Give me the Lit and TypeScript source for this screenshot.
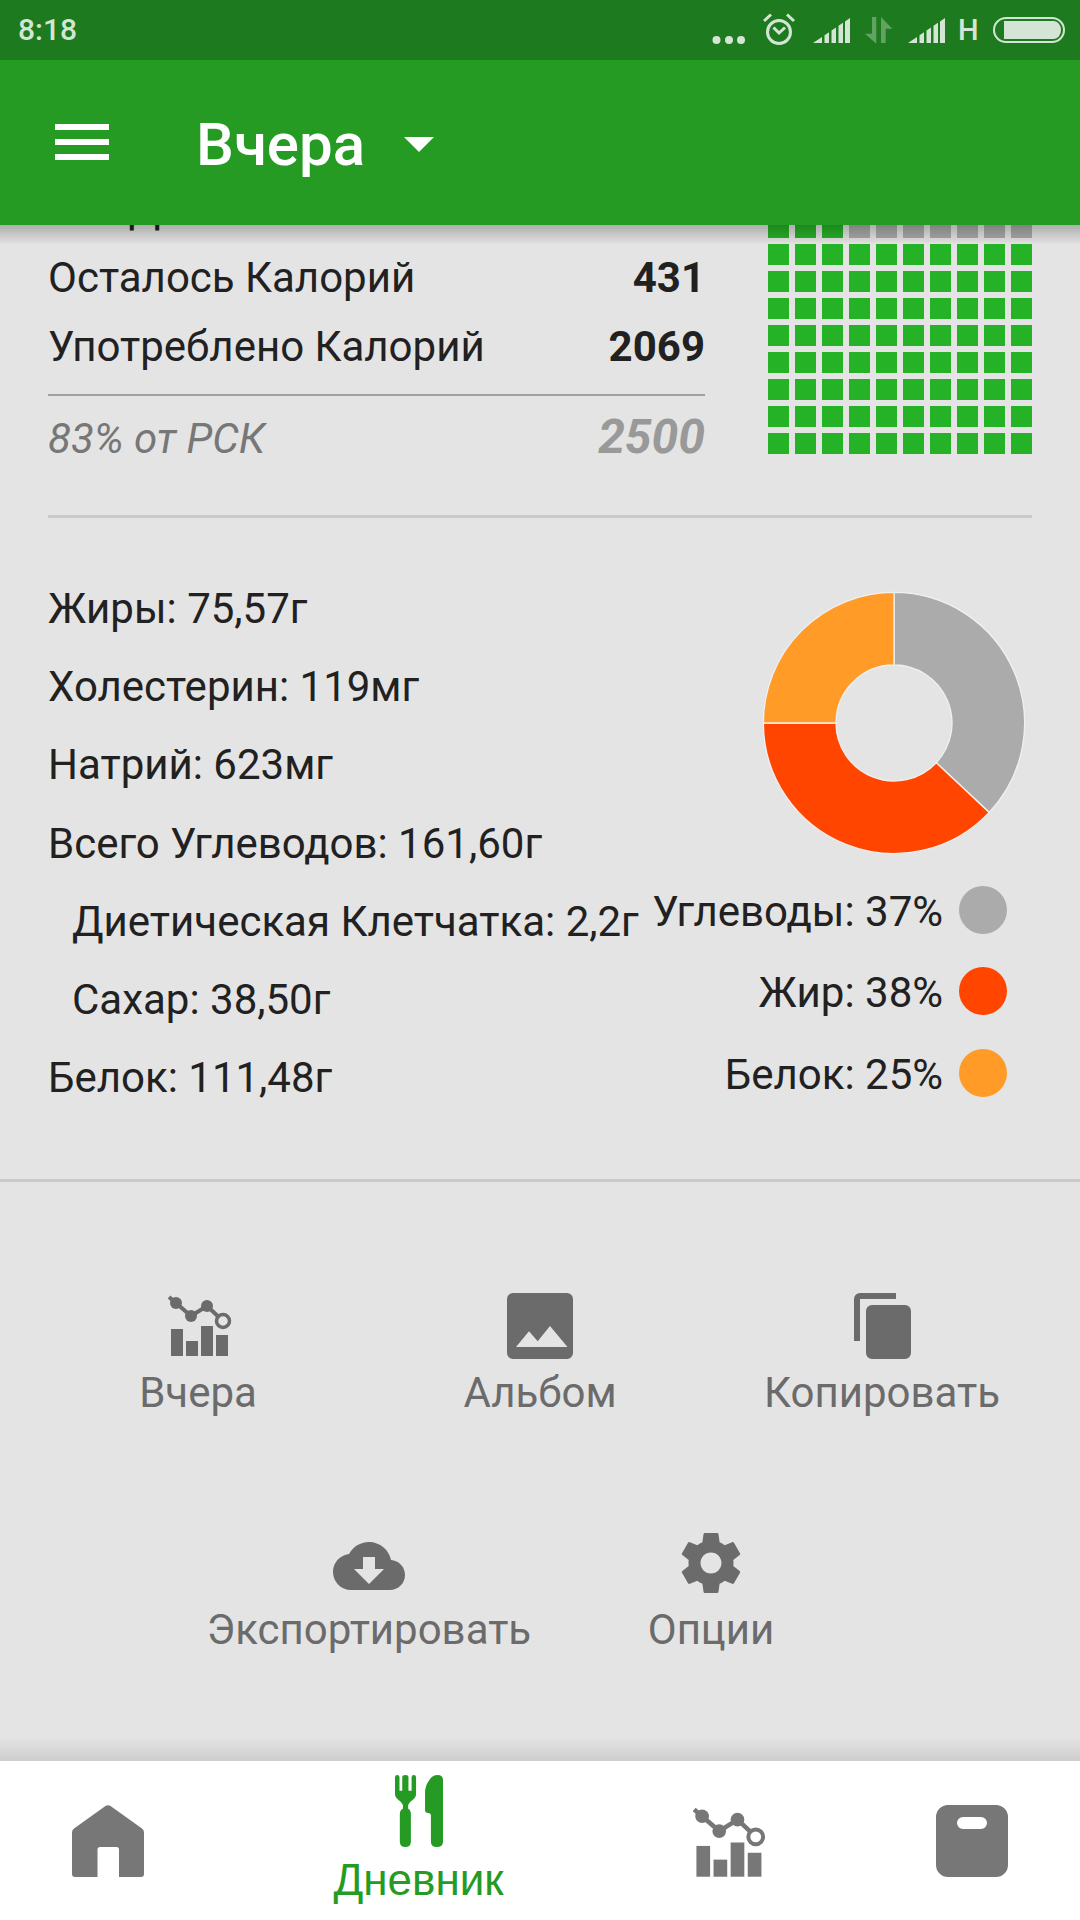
import { LitElement, html, css, svg } from "lit";
import { customElement } from "lit/decorators.js";

const signal = (extra = "") => {
  const bars = [[0, 9], [11.5, 16], [18.5, 23], [25.5, 30], [32, 37]];
  const y = (x: number) => 25 - (x * 25) / 37;
  return html`<svg class="sig ${extra}" viewBox="0 0 37 25">${bars.map(([a, b]) =>
    svg`<polygon points="${a},25 ${a},${y(a)} ${b},${y(b)} ${b},25" fill="#d5e5d5"/>`)}</svg>`;
};

const chart = (cls: string) => html`<svg class=${cls} viewBox="0 0 64 62" fill="currentColor">
  <rect x="3" y="34" width="12" height="27"/><rect x="18" y="46" width="12" height="15"/>
  <rect x="33" y="31" width="12" height="30"/><rect x="48" y="40" width="12" height="21"/>
  <polyline points="1,2 8,8 23,21 39,11 54,25" fill="none" stroke="currentColor" stroke-width="4"/>
  <circle cx="8" cy="8" r="6"/><circle cx="23" cy="21" r="6"/><circle cx="39" cy="11" r="6"/>
  <circle cx="55" cy="26" r="6.5" stroke="currentColor" stroke-width="3.5" class="ring"/>
</svg>`;

const polar = (r: number, pct: number) => {
  const a = (pct / 100) * 2 * Math.PI;
  return [135 + r * Math.sin(a), 135 - r * Math.cos(a)];
};
const slice = (from: number, to: number) => {
  const R = 130.6, r = 58;
  const [x1, y1] = polar(R, from), [x2, y2] = polar(R, to), [x3, y3] = polar(r, to), [x4, y4] = polar(r, from);
  const large = to - from > 50 ? 1 : 0;
  return `M${x1} ${y1}A${R} ${R} 0 ${large} 1 ${x2} ${y2}L${x3} ${y3}A${r} ${r} 0 ${large} 0 ${x4} ${y4}Z`;
};

@customElement("app-root")
export class AppRoot extends LitElement {
  static styles = css`
    :host { display: block; width: 1080px; height: 1920px; font-family: Roboto, "Noto Sans", sans-serif; color: #212121; background: #e4e4e4; }
    .page { display: flex; flex-direction: column; width: 1080px; height: 1920px; overflow: hidden; }
    .status { height: 60px; flex: none; background: #1e7a1e; display: flex; align-items: center; color: #d5e5d5; position: relative; z-index: 3; }
    .time { margin-left: 18px; font-size: 30px; font-weight: 500; line-height: 60px; }
    .sicons { margin-left: auto; margin-right: 15px; display: flex; align-items: center; height: 60px; }
    .sicons svg { display: block; flex: none; }
    .dots { width: 33px; height: 10px; margin-top: 19px; }
    .alarm { width: 32px; height: 32px; margin-left: 18px; margin-top: -2px; }
    .sig { width: 37px; height: 25px; margin-left: 18px; margin-top: 1px; }
    .sicons .sig2 { margin-left: 15px; }
    .arrows { width: 28px; height: 27px; margin-left: 15px; margin-top: 0px; }
    .h { font-size: 29px; font-weight: 500; width: 18px; margin-left: 13px; margin-right: 1px; line-height: 60px; text-align: center; }
    .batt { width: 72px; height: 26px; margin-left: 16px; margin-top: 0px; }
    .bar { height: 165px; flex: none; background: #259b24; display: flex; align-items: center; position: relative; z-index: 2; color: #fff; }
    .bar::after { content: ""; position: absolute; left: 0; right: 0; top: 100%; height: 20px; background: linear-gradient(rgba(0,0,0,.24), rgba(0,0,0,0)); }
    .burger { margin-left: 55px; width: 54px; display: flex; flex-direction: column; gap: 9px; margin-top: -2px; }
    .burger i { display: block; height: 6px; background: #fff; }
    .title { margin-left: 87px; font-size: 60px; font-weight: 500; line-height: 80px; margin-top: 4px; }
    .caret { margin-left: 39px; width: 0; height: 0; border-left: 15px solid transparent; border-right: 15px solid transparent; border-top: 15px solid #fff; margin-top: 4px; }
    .main { flex: 1; min-height: 0; overflow: hidden; }
    .scroll { margin-top: -51px; }
    .summary { display: flex; padding: 0 48px; gap: 63px; }
    .cal { width: 657px; flex: none; }
    .row { display: flex; justify-content: space-between; font-size: 42px; line-height: 69px; height: 69px; }
    .row b { font-weight: 700; }
    .rule { height: 2px; background: #a0a0a0; margin-top: 13px; margin-bottom: 6px; }
    .row.pct { color: #777; font-style: italic; align-items: baseline; height: 71px; }
    .row.pct b { color: #999; font-size: 48px; }
    .cells { display: grid; grid-template-columns: repeat(10, 21px); grid-auto-rows: 21px; gap: 6px; margin-top: 16px; }
    .cells i { display: block; background: #26b226; }
    .cells i.off { background: #aaa; }
    .div1 { height: 3px; background: #c9c9c9; margin: 42px 48px 0; }
    .nutri { display: flex; }
    .list { width: 640px; flex: none; padding: 52px 0 62px 48px; box-sizing: border-box; font-size: 42px; line-height: 78.2px; }
    .list .sub { padding-left: 24px; }
    .list div { white-space: nowrap; }
    .right { flex: 1; display: flex; flex-direction: column; align-items: flex-end; padding-right: 73px; }
    .donut { width: 270px; height: 270px; margin-top: 70px; margin-right: -22px; display: block; margin-bottom: 11px; }
    .leg { display: flex; align-items: center; gap: 16px; font-size: 42px; line-height: 81.5px; height: 81.5px; white-space: nowrap; }
    .leg span { padding-top: 3px; }
    .leg i { width: 48px; height: 48px; border-radius: 50%; display: block; }
    .div2 { height: 3px; background: #c9c9c9; }
    .actions { padding-top: 108px; display: flex; flex-direction: column; gap: 109px; }
    .arow { display: flex; justify-content: center; }
    .act { width: 342px; display: flex; flex-direction: column; align-items: center; color: #6b6b6b; }
    .ibox { height: 72px; display: flex; align-items: center; justify-content: center; }
    .ibox svg { display: block; }
    .lab { margin-top: 6px; font-size: 42px; line-height: 50px; white-space: nowrap; }
    .chartA { width: 64px; height: 62px; margin-left: 3px; }
    .chartA .ring { fill: #e4e4e4; }
    .albumI { width: 66px; height: 66px; }
    .copyI { width: 57px; height: 66px; }
    .i72 { width: 72px; height: 72px; }
    .nav { height: 159px; flex: none; background: #fff; display: flex; position: relative; padding-left: 72px; color: #777; }
    .nav::before { content: ""; position: absolute; left: 0; right: 0; bottom: 100%; height: 24px; background: linear-gradient(rgba(0,0,0,0), rgba(0,0,0,.1)); }
    .nav svg { display: block; }
    .nitem { margin-top: 44px; }
    .homeI, .scaleI { width: 72px; height: 72px; }
    .chartN { width: 73px; height: 71px; margin: 2px 0 0 0; }
    .chartN .ring { fill: #fff; }
    .active { margin-top: 14px; margin-left: 189px; width: 171px; display: flex; flex-direction: column; align-items: center; color: #259b24; }
    .forkI { width: 48px; height: 72px; }
    .alab { font-family: "Liberation Sans", Arial, sans-serif; font-size: 44px; line-height: 46px; margin-top: 10px; white-space: nowrap; }
    .m189 { margin-left: 189px; }
    .m171 { margin-left: 170px; }
  `;

  render() {
    const cells = Array.from({ length: 100 }, (_, i) => i >= 10 && (i < 13 || i >= 20));
    return html`<div class="page">
      <div class="status">
        <span class="time">8:18</span>
        <div class="sicons">
          <svg class="dots" viewBox="0 0 33 10" fill="#d5e5d5"><circle cx="4.5" cy="5" r="4"/><circle cx="17" cy="5" r="4"/><circle cx="29" cy="5" r="4"/></svg>
          <svg class="alarm" viewBox="0 0 32 32" fill="none" stroke="#d5e5d5" stroke-width="3"><circle cx="16" cy="19" r="11.5"/><polyline points="10.5,14.5 16,20 22,14.5"/><path d="M1 8 8 1.5M24 1.5 31 8"/></svg>
          ${signal()}
          <svg class="arrows" viewBox="0 0 28 27" fill="#fff" opacity=".3"><polygon points="7,0 11.3,0 11.3,26.7 0,16.7 7,16.7"/><polygon points="16,0 27.3,11.7 20.7,11.7 20.7,26 16,26"/></svg>
          ${signal("sig2")}
          <span class="h">H</span>
          <svg class="batt" viewBox="0 0 72 26"><rect x="1" y="1" width="70" height="24" rx="12" fill="none" stroke="#d5e5d5" stroke-width="2"/><path d="M11 4H61a7 9 0 0 1 7 9a7 9 0 0 1 -7 9H11Z" fill="#d5e5d5"/></svg>
        </div>
      </div>
      <div class="bar">
        <div class="burger"><i></i><i></i><i></i></div>
        <span class="title">Вчера</span>
        <span class="caret"></span>
      </div>
      <div class="main"><div class="scroll">
        <div class="summary">
          <div class="cal">
            <div class="row"><span>Все Дни</span><b></b></div>
            <div class="row"><span>Осталось Калорий</span><b>431</b></div>
            <div class="row"><span>Употреблено Калорий</span><b>2069</b></div>
            <div class="rule"></div>
            <div class="row pct"><span>83% от РСК</span><b>2500</b></div>
          </div>
          <div class="cells">${cells.map((on) => html`<i class=${on ? "" : "off"}></i>`)}</div>
        </div>
        <div class="div1"></div>
        <div class="nutri">
          <div class="list">
            <div>Жиры: 75,57г</div>
            <div>Холестерин: 119мг</div>
            <div>Натрий: 623мг</div>
            <div>Всего Углеводов: 161,60г</div>
            <div class="sub">Диетическая Клетчатка: 2,2г</div>
            <div class="sub">Сахар: 38,50г</div>
            <div>Белок: 111,48г</div>
          </div>
          <div class="right">
            <svg class="donut" viewBox="0 0 270 270" stroke="#f0f0f0" stroke-width="1.3">
              <path d=${slice(0, 37)} fill="#ababab"/>
              <path d=${slice(37, 75)} fill="#ff4500"/>
              <path d=${slice(75, 100)} fill="#ff9b26"/>
            </svg>
            <div class="leg"><span>Углеводы: 37%</span><i style="background:#ababab"></i></div>
            <div class="leg"><span>Жир: 38%</span><i style="background:#ff4500"></i></div>
            <div class="leg"><span>Белок: 25%</span><i style="background:#ff9b26"></i></div>
          </div>
        </div>
        <div class="div2"></div>
        <div class="actions">
          <div class="arow">
            <div class="act"><div class="ibox">${chart("chartA")}</div><div class="lab">Вчера</div></div>
            <div class="act"><div class="ibox"><svg class="albumI" viewBox="0 0 66 66"><path fill="currentColor" fill-rule="evenodd" d="M6 0H60a6 6 0 0 1 6 6V60a6 6 0 0 1-6 6H6a6 6 0 0 1-6-6V6a6 6 0 0 1 6-6ZM9 54H60.5L43 33 30.7 48.3 22 38.3Z"/></svg></div><div class="lab">Альбом</div></div>
            <div class="act"><div class="ibox"><svg class="copyI" viewBox="0 0 57 66"><path fill="currentColor" d="M6 0H42V6H6V48H0V6A6 6 0 0 1 6 0ZM18 12H51A6 6 0 0 1 57 18V60A6 6 0 0 1 51 66H18A6 6 0 0 1 12 60V18A6 6 0 0 1 18 12Z"/></svg></div><div class="lab">Копировать</div></div>
          </div>
          <div class="arow">
            <div class="act"><div class="ibox"><svg class="i72" viewBox="0 -1 24 24"><path fill="currentColor" d="M19.35 10.04C18.67 6.59 15.64 4 12 4 9.11 4 6.6 5.64 5.35 8.04 2.34 8.36 0 10.91 0 14c0 3.31 2.69 6 6 6h13c2.76 0 5-2.24 5-5 0-2.64-2.05-4.78-4.65-4.96zM17 13l-5 5-5-5h3V9h4v4h3z"/></svg></div><div class="lab">Экспортировать</div></div>
            <div class="act"><div class="ibox"><svg class="i72" viewBox="0 0 24 24"><path fill="currentColor" d="M19.43 12.98c.04-.32.07-.64.07-.98s-.03-.66-.07-.98l2.11-1.65c.19-.15.24-.42.12-.64l-2-3.46c-.12-.22-.39-.3-.61-.22l-2.49 1c-.52-.4-1.08-.73-1.69-.98l-.38-2.65C14.46 2.18 14.25 2 14 2h-4c-.25 0-.46.18-.49.42l-.38 2.65c-.61.25-1.17.59-1.69.98l-2.49-1c-.23-.09-.49 0-.61.22l-2 3.46c-.13.22-.07.49.12.64l2.11 1.65c-.04.32-.07.65-.07.98s.03.66.07.98l-2.11 1.65c-.19.15-.24.42-.12.64l2 3.46c.12.22.39.3.61.22l2.49-1c.52.4 1.08.73 1.69.98l.38 2.65c.03.24.24.42.49.42h4c.25 0 .46-.18.49-.42l.38-2.65c.61-.25 1.17-.59 1.69-.98l2.49 1c.23.09.49 0 .61-.22l2-3.46c.12-.22.07-.49-.12-.64l-2.11-1.65zM12 15.5c-1.93 0-3.5-1.57-3.5-3.5s1.57-3.5 3.5-3.5 3.5 1.57 3.5 3.5-1.57 3.5-3.5 3.5z"/></svg></div><div class="lab">Опции</div></div>
          </div>
        </div>
      </div></div>
      <div class="nav">
        <div class="nitem"><svg class="homeI" viewBox="0 0 72 72"><path fill="currentColor" d="M33.8 .8Q36 -.5 38.2 .8L70 23.5Q72 25 72 27.5V69Q72 72 69 72H47V44.5Q47 42 44.5 42H28Q25.5 42 25.5 44.5V72H3Q0 72 0 69V27.5Q0 25 2 23.5Z"/></svg></div>
        <div class="active">
          <svg class="forkI" viewBox="1147 165 139 216" preserveAspectRatio="none"><path fill="currentColor" d="M1147 172Q1147 165 1153.5 165Q1160 165 1160 172V212H1168V172Q1168 165 1177 165Q1186 165 1186 172V212H1195V172Q1195 165 1201.5 165Q1208 165 1208 172V222Q1208 232 1198 240Q1185 250 1185 258V266Q1193 270 1193 282V365Q1193 381 1177 381Q1161 381 1161 365V282Q1161 270 1170 266V258Q1170 250 1157 240Q1147 232 1147 222ZM1286 180Q1286 165 1270 165Q1255 165 1245 182Q1234 198 1234 218V270Q1234 279 1243 279Q1251 279 1251 287V365Q1251 381 1268 381Q1286 381 1286 365Z"/></svg>
          <div class="alab">Дневник</div>
        </div>
        <div class="nitem m189">${chart("chartN")}</div>
        <div class="nitem m171"><svg class="scaleI" viewBox="0 0 72 72"><path fill="currentColor" fill-rule="evenodd" d="M12 0H60A12 12 0 0 1 72 12V60A12 12 0 0 1 60 72H12A12 12 0 0 1 0 60V12A12 12 0 0 1 12 0ZM27 12A6 6 0 0 0 27 24H45A6 6 0 0 0 45 12Z"/></svg></div>
      </div>
    </div>`;
  }
}
